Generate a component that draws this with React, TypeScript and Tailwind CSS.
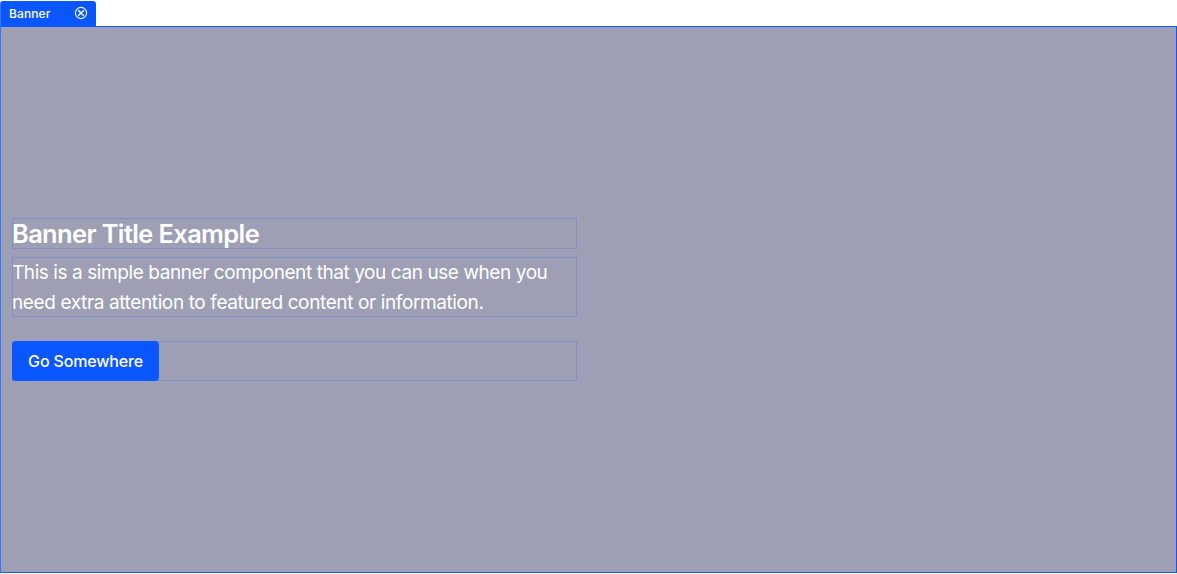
export default function App() {
  return (
    <div className="flex h-[574px] w-[1177px] flex-col overflow-hidden bg-white pt-px pb-px font-['Inter','Liberation_Sans',sans-serif] text-white">
      <header className="flex h-[25px] w-24 shrink-0 items-center justify-between rounded-t-[3px] border-l border-[#3377ff] bg-[#0a57ff] pr-2 pl-2">
        <span className="text-[12px] leading-4 font-medium tracking-[0.12px]">Banner</span>
        <svg className="mb-px size-3.5" viewBox="0 0 14 14" fill="none" stroke="currentColor" strokeWidth="1.1">
          <circle cx="7" cy="7" r="5.6" />
          <path d="M4.2 4.2 9.8 9.8M9.8 4.2 4.2 9.8" strokeWidth="1.4" />
        </svg>
      </header>
      <main className="flex flex-1 flex-col justify-center border border-[#0a57ff] border-l-[#3377ff] bg-[#9e9fb4] pl-[11px]">
        <section className="flex w-[565px] flex-col">
          <h1 className="h-[31px] text-[25.4px] leading-[32px] font-semibold tracking-[-0.6px] whitespace-nowrap outline outline-[#808fc4] -outline-offset-1">
            Banner Title Example
          </h1>
          <p className="mt-2 h-[60px] pt-px text-[19px] leading-[30px] tracking-[-0.42px] whitespace-nowrap outline outline-[#808fc4] -outline-offset-1">
            This is a simple banner component that you can use when you<br /><span className="tracking-[-0.38px]">need extra attention to featured content or information.</span>
          </p>
          <div className="mt-6 flex h-10 outline outline-[#808fc4] -outline-offset-1">
            <button className="relative h-10 w-[147px] rounded bg-[#0a57ff] text-base font-medium tracking-[-0.17px]">Go Somewhere</button>
          </div>
        </section>
      </main>
    </div>
  );
}
